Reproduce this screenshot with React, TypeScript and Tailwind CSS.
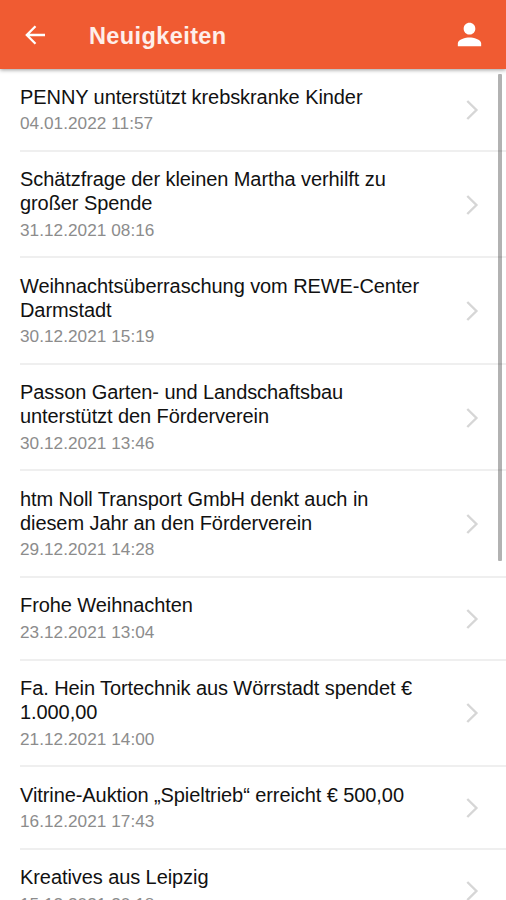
import { MdPerson } from "react-icons/md";

type NewsItem = {
  id: number;
  lines: string[];
  date: string;
};

const newsItems: NewsItem[] = [
  { id: 1, lines: ["PENNY unterstützt krebskranke Kinder"], date: "04.01.2022 11:57" },
  { id: 2, lines: ["Schätzfrage der kleinen Martha verhilft zu", "großer Spende"], date: "31.12.2021 08:16" },
  { id: 3, lines: ["Weihnachtsüberraschung vom REWE-Center", "Darmstadt"], date: "30.12.2021 15:19" },
  { id: 4, lines: ["Passon Garten- und Landschaftsbau", "unterstützt den Förderverein"], date: "30.12.2021 13:46" },
  { id: 5, lines: ["htm Noll Transport GmbH denkt auch in", "diesem Jahr an den Förderverein"], date: "29.12.2021 14:28" },
  { id: 6, lines: ["Frohe Weihnachten"], date: "23.12.2021 13:04" },
  { id: 7, lines: ["Fa. Hein Tortechnik aus Wörrstadt spendet €", "1.000,00"], date: "21.12.2021 14:00" },
  { id: 8, lines: ["Vitrine-Auktion „Spieltrieb“ erreicht € 500,00"], date: "16.12.2021 17:43" },
  { id: 9, lines: ["Kreatives aus Leipzig"], date: "15.12.2021 20:18" },
];

function Header() {
  return (
    <header className="relative z-10 flex h-[69px] shrink-0 items-center bg-[#f05b32] pt-[3px] pr-[19px] pl-[25px] text-white shadow-[0_1px_4px_rgba(0,0,0,0.4)]">
      <button aria-label="Zurück" className="w-[64px] pb-[2px]">
        <svg width="21" height="20" viewBox="0 0 21 20" fill="none" stroke="currentColor" strokeWidth="2.3">
          <path d="M10.5 1.2 1.8 10l8.7 8.8M2 10h18" />
        </svg>
      </button>
      <h1 className="flex-1 text-[23.5px] leading-7 font-bold tracking-[0.4px] text-white/90">
        Neuigkeiten
      </h1>
      <button aria-label="Profil" className="pb-[3px]">
        <MdPerson size={35} />
      </button>
    </header>
  );
}

function Chevron() {
  return (
    <svg
      className="mr-[27px] text-[#d6d6d6]"
      width="13"
      height="20"
      viewBox="0 0 13 20"
      fill="none"
      stroke="currentColor"
      strokeWidth="2.4"
    >
      <path d="M1.3 1 10.4 10l-9.1 9" />
    </svg>
  );
}

function NewsRow({ item }: { item: NewsItem }) {
  return (
    <li className="ml-5 flex items-center border-b-2 border-[#efefef] pt-[16.6px] pb-[15.5px]">
      <div className="flex-1 whitespace-nowrap">
        <h2 className="text-[20px] leading-[23.7px] tracking-[-0.08px] text-[#111111]">
          {item.lines.map((line) => (
            <span key={line} className="block">
              {line}
            </span>
          ))}
        </h2>
        <p className="mt-[3px] text-[17.2px] leading-[22px] tracking-[0.04px] text-[#8c8c8c]">{item.date}</p>
      </div>
      <Chevron />
    </li>
  );
}

export default function App() {
  return (
    <main className="relative flex h-[900px] w-full flex-col overflow-hidden bg-white font-['Liberation_Sans',Arial,sans-serif]">
      <Header />
      <ul>
        {newsItems.map((item) => (
          <NewsRow key={item.id} item={item} />
        ))}
      </ul>
      {/* scroll indicator */}
      <div className="absolute top-[74px] right-[4px] h-[487px] w-[4px] rounded-[1px] bg-black/30" />
    </main>
  );
}
